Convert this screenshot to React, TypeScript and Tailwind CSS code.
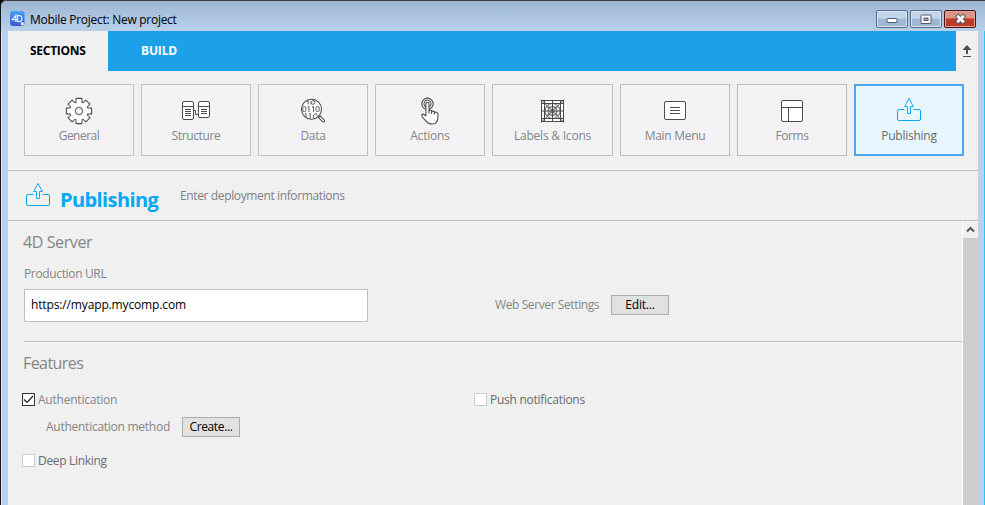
import type { ReactNode } from "react";

const STROKE = "#4d4d4d";

function GearIcon() {
  const teeth = [0, 45, 90, 135, 180, 225, 270, 315];
  return (
    <svg width="28" height="28" viewBox="-14 -14 28 28" fill="none">
      {teeth.map((a) => (
        <path key={a} d="M-2.9 -8 V-12.6 H2.9 V-8" transform={`rotate(${a})`} fill="#fff" stroke={STROKE} strokeWidth="1.1" strokeLinejoin="round" />
      ))}
      <circle r="9.400" fill="#fff" stroke={STROKE} strokeWidth="1.1" />
      {teeth.map((a) => (
        <rect key={a} x="-2.4" y="-11" width="4.8" height="4" fill="#fff" transform={`rotate(${a})`} />
      ))}
      <circle r="3.6" fill="#f3f3f6" stroke="#777" strokeWidth="1.3" />
    </svg>
  );
}

function StructureIcon() {
  return (
    <svg width="28" height="28" viewBox="0 0 28 28" fill="#fff" stroke={STROKE}>
      <path d="M12 13.5H13.5V17.5H17" fill="none" />
      <rect x="0.5" y="4.5" width="11" height="18" rx="1.5" />
      <rect x="16.5" y="4.5" width="11" height="16" rx="1.5" />
      <path d="M.5 9.5H11.5M3 12.5H9M3 14.5H9M3 16.5H9M3 18.5H9M16.5 9.5H27.5M19 12.5H25M19 14.5H25M19 16.5H25" />
    </svg>
  );
}

function DataIcon() {
  return (
    <svg width="28" height="28" viewBox="-1 0 28 28" fill="none" stroke={STROKE}>
      <path d="M18.5 20.4L20.1 18.8L24.4 23.2Q24.9 25.4 22.7 24.8Z" fill="#fff" strokeWidth="1.1" />
      <circle cx="11.5" cy="12.3" r="10" fill="#fff" strokeWidth="1.1" />
      <g strokeWidth=".9">
        <path d="M7 4.5L8.2 4V7.5M11 4.5V7.5M11 4.5Q13 2.500 15 4.5V6Q13 9 11 6" />
        <rect x="2.8" y="9.5" width="3" height="5" rx="1.3" />
        <path d="M7.5 10.3L9 9.5V15M12 10.3L13.5 9.5V15" />
        <rect x="16" y="9.5" width="3.2" height="5" rx="1.3" />
        <path d="M5 17L6 16.5V20M9 17L10.2 16.5V21.5" />
        <path d="M13.5 21V18Q15 15.5 17 17.5V19" />
      </g>
    </svg>
  );
}

function TouchIcon() {
  return (
    <svg width="28" height="28" viewBox="-1 -.5 28 28" fill="none" stroke={STROKE}>
      <circle cx="10.5" cy="6.3" r="5.7" strokeWidth="1.1" />
      <circle cx="10.5" cy="6.3" r="3.6" strokeWidth="1" />
      <path
        d="M8.9 18.4V6.3Q8.9 4.8 10.5 4.8Q12 4.8 12 6.3V13.2Q13.2 12.2 14.6 13.2V14Q16.2 13 17.4 14.4V15Q19.4 14 20.9 16V20.5Q20.6 26.5 15 26.5Q11 26.5 9 23.6L5.3 19.3Q4.2 17 5.8 16.6Q7 16.5 8.9 18.4ZM12 13.2V16M14.6 13.5V16.5M17.4 14.5V17"
        fill="#fff"
        strokeWidth="1.1"
        strokeLinejoin="round"
      />
    </svg>
  );
}

function GridIcon() {
  return (
    <svg width="28" height="28" viewBox="0 0 28 28" fill="none" stroke="#4a4a4a">
      <rect x="2.5" y="3.5" width="22" height="21" fill="#fff" />
      <path d="M2.5 6.5H24.5M2.5 21.5H24.5M5.5 3.5V24.5M21.5 3.5V24.5M13.5 3V25M2 14H25" strokeWidth="1" />
      <path d="M2 2.500L25 25.5M25 2.5L2 25.5" strokeWidth="1" />
      <circle cx="13.5" cy="14" r="7.500" strokeWidth=".8" />
      <circle cx="13.5" cy="14" r="4.5" strokeWidth=".9" />
      <circle cx="13.5" cy="14" r="1.800" strokeWidth=".8" />
      <path d="M10 6.500V21.500M17 6.500V21.500M5.500 10.500H21.500M5.500 17.500H21.500" strokeWidth=".4" />
    </svg>
  );
}

function MenuIcon() {
  return (
    <svg width="28" height="28" viewBox="0 0 28 28" fill="#fff" stroke={STROKE}>
      <rect x="3.5" y="4.5" width="21" height="18" rx="1.5" />
      <path d="M9 10.5H19M9 13.5H19M9 16.5H19" />
    </svg>
  );
}

function FormsIcon() {
  return (
    <svg width="28" height="28" viewBox="0 0 28 28" fill="#fff" stroke={STROKE}>
      <rect x="3.5" y="3.5" width="21" height="21" rx="1.5" />
      <path d="M3.5 10.5H24.5M10.5 10.5V24.5" />
    </svg>
  );
}

function PublishIcon() {
  return (
    <svg className="shrink-0" width="28" height="28" viewBox="0 0 28 28" fill="none" stroke="#03a9f4" strokeLinejoin="round">
      <path d="M9.5 12.5H4Q2.5 12.5 2.5 14V22Q2.5 23.5 4 23.5H24Q25.5 23.5 25.5 22V14Q25.5 12.5 24 12.5H18.5" />
      <path d="M14 1.5L18.300 9.5H15.500V16.5H12.500V9.5H9.700Z" fill="#fff" fillOpacity=".5" />
    </svg>
  );
}

function Card({ icon, label, w = "w-[110px]", t }: { icon: ReactNode; label: string; w?: string; t: string }) {
  return (
    <div className={`${w} flex h-[72px] flex-col items-center border border-[#c0c0c0] bg-[#f3f3f6] pt-3`}>
      {icon}
      <span className={`mt-[3px] text-[12px] leading-4 whitespace-nowrap text-[#858585] ${t}`}>{label}</span>
    </div>
  );
}

function Btn({ children, t }: { children: ReactNode; t: string }) {
  return (
    <button className={`h-5 w-[58px] border border-[#adadad] bg-[#e1e1e1] text-center text-[12px] leading-[18px] text-black ${t}`}>{children}</button>
  );
}

function Check({ checked = false }: { checked?: boolean }) {
  return (
    <span className={`block size-[13px] border bg-white ${checked ? "border-[#333]" : "border-[#cccccc]"}`}>
      {checked && (
        <svg width="11" height="11" viewBox="0 0 11 11" fill="none" stroke="#222" strokeWidth="1.2">
          <path d="M1 5.500L4 8.500L10 2" />
        </svg>
      )}
    </span>
  );
}

function TitleBar() {
  return (
    <header className="flex h-[31px] items-start rounded-tl-md border-t border-[#3a3c40] bg-linear-to-b from-[#9db6d3] to-[#b8d0ea] pl-2">
      <svg className="mt-[10px] ml-[1px]" width="15" height="16" viewBox="0 0 15 16">
        <defs>
          <linearGradient id="logo" x1="0" y1="0" x2="0" y2="1">
            <stop offset="0" stopColor="#43a5f5" />
            <stop offset="1" stopColor="#4053c8" />
          </linearGradient>
        </defs>
        <rect width="14.500" height="15" rx="3" fill="url(#logo)" />
        <path d="M5.800 11V4.500L2.300 8.700H7M7.500 4.500H8.700Q12 4.800 12 7.700Q11.800 10.500 8.700 10.700H7.500Z" fill="none" stroke="#e4eeff" strokeWidth="1.200" />
        <circle cx="12.300" cy="12.800" r="1.700" fill="#dfe9ff" />
      </svg>
      <span className="mt-[11px] ml-[5px] text-[12px] leading-4 tracking-[-0.28px] text-black">Mobile Project: New project</span>
      <div className="mt-[9px] mr-[9px] ml-auto flex gap-[2px]">
        <span className="flex h-[18px] w-8 items-center justify-center rounded-[2px] border border-[#566d8c] bg-linear-to-b from-[#c3d5e9] from-45% to-[#9db7d4] to-50% shadow-[inset_0_0_0_1px_#d6e4f3]">
          <svg width="12" height="12"><rect x="1" y="5.500" width="10" height="4" rx=".5" fill="#fff" stroke="#53596a" /></svg>
        </span>
        <span className="flex h-[18px] w-8 items-center justify-center rounded-[2px] border border-[#566d8c] bg-linear-to-b from-[#c3d5e9] from-45% to-[#9db7d4] to-50% shadow-[inset_0_0_0_1px_#d6e4f3]">
          <svg width="12" height="12"><rect x="1" y="2" width="10" height="8.500" rx=".5" fill="#fff" stroke="#53596a" /><rect x="4" y="5" width="4" height="2.500" fill="#8fabcc" stroke="#53596a" /></svg>
        </span>
        <span className="flex h-[18px] w-8 items-center justify-center rounded-[2px] border border-[#47141c] bg-linear-to-b from-[#dc9488] from-42% to-[#bd3b25] to-50% shadow-[inset_0_0_0_1px_#e0a396]">
          <svg width="13" height="12" fill="none"><path d="M2.500 2L10.500 10M10.500 2L2.500 10" stroke="#53596a" strokeWidth="4.500" /><path d="M3.200 2.700L9.800 9.300M9.800 2.700L3.200 9.300" stroke="#fff" strokeWidth="2.800" /></svg>
        </span>
      </div>
    </header>
  );
}

export default function App() {
  return (
    <div className="h-[505px] w-[985px] overflow-hidden bg-black font-['Open_Sans','Noto_Sans',sans-serif]">
      <div className="flex h-full flex-col rounded-tl-md border-l border-[#15171b] bg-[#b9d1ea]">
        <TitleBar />
        <div className="flex min-h-0 flex-1 border-r border-[#2bc4f0] border-l border-l-[#dce8f5] pr-[6px] pl-[6px]">
          <main className="flex w-[970px] flex-col bg-[#f0f0f0]">
            <nav className="flex h-10 shrink-0 text-[12px] leading-4 font-bold">
              <div className="w-[100px] pt-3 pl-[22px] tracking-[-0.28px] text-black">SECTIONS</div>
              <div className="w-[848px] bg-[#1ca1e8] pt-3 pl-[33px] tracking-[-0.15px] text-white">BUILD</div>
              <svg className="mt-[13px] ml-1" width="14" height="15" fill="none" stroke="#505050">
                <path d="M7 10V4" strokeWidth="2" />
                <path d="M2.500 6L7 1L11.500 6Z" fill="#505050" stroke="none" />
                <path d="M3 12.500H11" />
              </svg>
            </nav>
            <section className="flex h-[100px] shrink-0 gap-[7px] border-b border-[#c0c0c0] pt-[13px] pl-4">
              <Card icon={<GearIcon />} label="General" t="tracking-[-0.5px]" />
              <Card icon={<StructureIcon />} label="Structure" t="tracking-[-0.36px]" />
              <Card icon={<DataIcon />} label="Data" t="tracking-[-0.3px]" />
              <Card icon={<TouchIcon />} label="Actions" t="tracking-[-0.2px]" />
              <Card icon={<GridIcon />} label="Labels &amp; Icons" w="w-[121px]" t="tracking-[-0.22px]" />
              <Card icon={<MenuIcon />} label="Main Menu" t="tracking-[-0.3px]" />
              <Card icon={<FormsIcon />} label="Forms" t="tracking-[-0.4px]" />
              <div className="flex h-[72px] w-[110px] flex-col items-center border-2 border-[#4ba6ee] bg-[#e8f7ff] pt-[11px]">
                <PublishIcon />
                <span className="mt-[3px] text-[12px] leading-4 tracking-[-0.26px] text-[#6b6b6b]">Publishing</span>
              </div>
            </section>
            <section className="flex h-[50px] shrink-0 border-b border-[#c0c0c0] pt-[11px] pl-4">
              <PublishIcon />
              <h1 className="mt-1 ml-2 w-[120px] text-[20px] leading-7 font-bold tracking-[-0.6px] text-[#03a9f4]">Publishing</h1>
              <p className="mt-[6px] text-[12px] leading-4 tracking-[-0.37px] text-[#808080]">Enter deployment informations</p>
            </section>
            <div className="flex min-h-0 flex-1">
              <div className="flex w-[954px] flex-col text-[12px] leading-4 text-[#858585]">
                <h2 className="mt-[9px] ml-[15px] text-[16px] leading-6 tracking-[-0.4px]">4D Server</h2>
                <p className="mt-[12px] ml-4 tracking-[-0.35px]">Production URL</p>
                <div className="mt-[7px] ml-4 flex h-[33px] items-start">
                  <div className="h-[33px] w-[344px] border border-[#c0c0c0] bg-white pt-[7px] pl-[6px] tracking-[-0.14px] text-black">https://myapp.mycomp.com</div>
                  <span className="mt-2 ml-[127px] w-[116px] tracking-[-0.4px]">Web Server Settings</span>
                  <div className="mt-[6px] flex"><Btn t="tracking-[-0.2px]">Edit...</Btn></div>
                </div>
                <div className="mt-[19px] ml-4 border-t border-[#c0c0c0]" />
                <h2 className="mt-[9px] ml-[15px] text-[16px] leading-6 tracking-[-0.56px]">Features</h2>
                <div className="mt-[17px] ml-[14px] flex h-4 items-start pt-px">
                  <Check checked />
                  <span className="-mt-px ml-[3px] w-[436px] tracking-[-0.22px]">Authentication</span>
                  <Check />
                  <span className="-mt-px ml-[3px] tracking-[-0.27px] text-[#6b6b6b]">Push notifications</span>
                </div>
                <div className="mt-[9px] ml-[38px] flex h-5 items-start">
                  <span className="mt-[2px] w-[136px] tracking-[-0.26px]">Authentication method</span>
                  <Btn t="tracking-[-0.37px]">Create...</Btn>
                </div>
                <div className="mt-[16px] ml-[14px] flex h-4 items-start pt-px">
                  <Check />
                  <span className="-mt-px ml-[3px] tracking-[-0.32px] text-[#6b6b6b]">Deep Linking</span>
                </div>
              </div>
              <div className="flex w-4 flex-col border-l border-white bg-[#cdcdcd]">
                <div className="flex h-[17px] items-center justify-center bg-[#f0f0f0]">
                  <svg width="9" height="7" fill="none" stroke="#555" strokeWidth="2"><path d="M1 5.500L4.500 2L8 5.500" /></svg>
                </div>
              </div>
            </div>
          </main>
        </div>
      </div>
    </div>
  );
}
